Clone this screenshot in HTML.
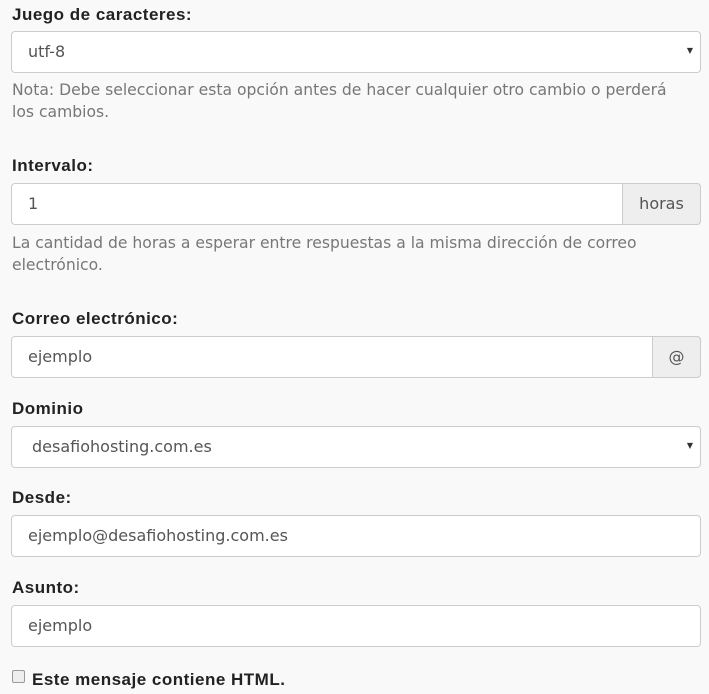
<!DOCTYPE html>
<html><head><meta charset="utf-8"><style>
body{margin:0;background:#f9f9f9;font-family:"DejaVu Sans",sans-serif;font-size:16px;color:#333;width:709px;height:694px;position:relative;overflow:hidden}
.l{position:absolute;left:12px;font-family:"Liberation Sans",sans-serif;font-size:17px;letter-spacing:0.5px;font-weight:bold;color:#222;line-height:20px}
.b{position:absolute;left:11px;width:690px;height:42px;box-sizing:border-box;border:1px solid #ccc;border-radius:4px;background:#fff;color:#555}
.b span{position:absolute;left:16px;top:10px;line-height:20px;white-space:nowrap}
.ar{position:absolute;right:7px;top:14px;font-size:8px;color:#333}
.ad{position:absolute;top:-1px;right:-1px;height:42px;box-sizing:border-box;border:1px solid #ccc;border-radius:0 4px 4px 0;background:#eee;color:#555;text-align:center;line-height:40px}
.h{position:absolute;left:12px;color:#777;line-height:22px;width:670px;font-size:15.6px}
</style></head><body>
<div class="l" style="top:5px">Juego de caracteres:</div>
<div class="b" style="top:31px"><span>utf-8</span><div class="ar">▼</div></div>
<div class="h" style="top:79px">Nota: Debe seleccionar esta opción antes de hacer cualquier otro cambio o perderá los cambios.</div>
<div class="l" style="top:156px">Intervalo:</div>
<div class="b" style="top:183px"><span>1</span><div class="ad" style="width:79px">horas</div></div>
<div class="h" style="top:232px">La cantidad de horas a esperar entre respuestas a la misma dirección de correo electrónico.</div>
<div class="l" style="top:309px">Correo electrónico:</div>
<div class="b" style="top:336px"><span>ejemplo</span><div class="ad" style="width:49px">@</div></div>
<div class="l" style="top:399px">Dominio</div>
<div class="b" style="top:426px"><span style="left:20px">desafiohosting.com.es</span><div class="ar">▼</div></div>
<div class="l" style="top:488px">Desde:</div>
<div class="b" style="top:515px"><span>ejemplo@desafiohosting.com.es</span></div>
<div class="l" style="top:578px">Asunto:</div>
<div class="b" style="top:605px"><span>ejemplo</span></div>
<div style="position:absolute;left:12px;top:670px;width:11px;height:11px;border:1px solid #999;border-radius:2px;background:#eee"></div>
<div class="l" style="top:670px;left:32px">Este mensaje contiene HTML.</div>
</body></html>
